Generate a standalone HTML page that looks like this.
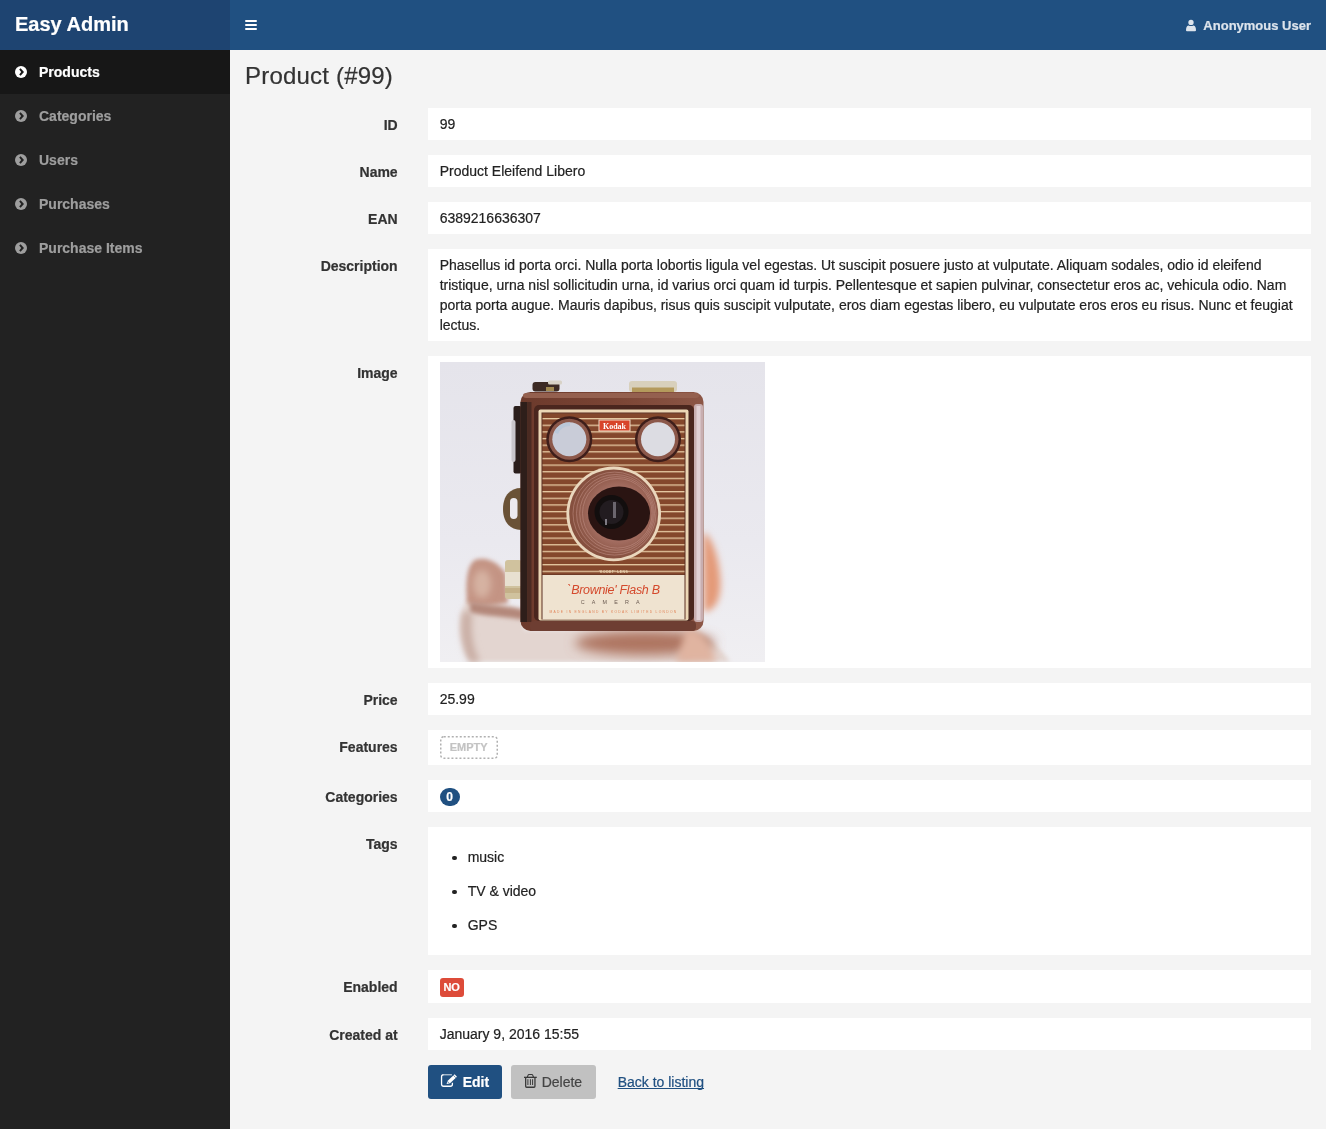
<!DOCTYPE html>
<html>
<head>
<meta charset="utf-8">
<title>Product (#99) - Easy Admin</title>
<style>
*{box-sizing:border-box;}
html,body{margin:0;padding:0;}
body{width:1326px;height:1129px;overflow:hidden;-webkit-text-stroke:0.2px currentColor;background:#f4f4f4;font-family:"Liberation Sans",sans-serif;font-size:14px;line-height:20px;color:#222;position:relative;}
.logo{position:absolute;left:0;top:0;width:230px;height:50px;background:#1e4471;color:#fff;font-size:20px;font-weight:bold;line-height:48px;padding-left:15px;}
.navbar{position:absolute;left:230px;top:0;right:0;height:50px;background:#205081;}
.burger{position:absolute;left:15px;top:20px;width:12px;height:10px;}
.burger i{display:block;position:absolute;left:0;width:12px;height:2px;background:#fff;border-radius:1px;}
.user{position:absolute;right:15px;top:16px;color:#dde4ec;font-size:13px;font-weight:bold;line-height:20px;}
.user svg{position:absolute;left:-18.5px;top:2.5px;}
.sidebar{position:absolute;left:0;top:50px;width:230px;bottom:0;background:#222;}
.menu{list-style:none;margin:0;padding:0;}
.menu li{position:relative;height:44px;line-height:44px;padding-left:39px;color:#9e9e9e;font-weight:bold;font-size:14px;}
.menu li.active{background:#171717;color:#fff;}
.menu li svg{position:absolute;left:15px;top:16px;}
.content{position:absolute;left:230px;top:50px;right:0;bottom:0;}
h1{position:absolute;left:15px;top:11px;margin:0;font-size:24px;font-weight:normal;line-height:30px;color:#333;letter-spacing:0.2px;}
.row{position:absolute;left:0;width:1096px;}
.row label{position:absolute;left:0;width:182.67px;padding-right:15px;text-align:right;font-weight:bold;color:#333;top:7px;line-height:20px;}
.row .fc{position:absolute;left:197.67px;width:883.33px;background:#fff;padding:6px 12px;line-height:20px;}

.empty{position:absolute;left:12px;top:6px;width:58px;height:23px;color:#c3c3c3;font-size:11px;font-weight:bold;line-height:23px;text-align:center;}
.badge{position:absolute;left:12px;top:8px;width:20px;height:18px;border-radius:9px;background:#205081;color:#fff;font-size:12px;font-weight:bold;line-height:18px;text-align:center;}
.lbl-no{position:absolute;left:12px;top:8px;width:24px;height:19px;border-radius:3px;background:#dd4b39;color:#fff;font-size:11px;font-weight:bold;line-height:19px;text-align:center;}
ul.tags{list-style:none;margin:0;padding:7px 0 7px 0;}
ul.tags li{position:relative;padding:7px 0 7px 28px;line-height:20px;}
ul.tags li:before{content:"";position:absolute;left:12.75px;top:15.75px;width:4.5px;height:4.5px;border-radius:50%;background:#222;}
.actions{position:absolute;left:197.67px;top:1015px;height:34px;}
.btn{position:absolute;top:0;height:34px;border-radius:3px;line-height:34px;font-size:14px;}
.btn svg{position:absolute;}
.btn-edit{left:0;width:74px;background:#205081;color:#fff;font-weight:bold;padding-left:35px;}
.btn-edit svg{left:12px;top:9px;}
.btn-del{left:83px;width:85px;background:#c1c1c1;color:#444;padding-left:31px;}
.btn-del svg{left:13px;top:9px;}
.back{position:absolute;left:190px;top:0;line-height:34px;color:#205081;text-decoration:underline;text-decoration-skip-ink:none;white-space:nowrap;}
.fc svg.cam{position:absolute;left:12px;top:6px;}
</style>
</head>
<body><div id="wrap" style="position:absolute;left:0;top:0;width:1326px;height:1129px;will-change:transform;">
<div class="logo">Easy Admin</div>
<div class="navbar">
  <div class="burger"><i style="top:0"></i><i style="top:4px"></i><i style="top:8px"></i></div>
  <div class="user"><svg width="12" height="13" viewBox="0 0 12 13"><circle cx="6" cy="3.4" r="2.65" fill="#dde4ec"/><path d="M1 11.2 Q1 7.3 3.4 6.5 Q6 7.7 8.6 6.5 Q11 7.3 11 11.2 Q11 12.2 10 12.2 H2 Q1 12.2 1 11.2 Z" fill="#dde4ec"/></svg>Anonymous User</div>
</div>
<div class="sidebar">
  <ul class="menu">
    <li class="active"><svg width="12" height="12" viewBox="0 0 12 12"><circle cx="6" cy="6" r="6" fill="#fff"/><path d="M5.6 2.2 L9 6 L5.6 9.8 L4.2 8.4 L6.2 6 L4.2 3.6 Z" fill="#171717"/></svg>Products</li>
    <li><svg width="12" height="12" viewBox="0 0 12 12"><circle cx="6" cy="6" r="6" fill="#9e9e9e"/><path d="M5.6 2.2 L9 6 L5.6 9.8 L4.2 8.4 L6.2 6 L4.2 3.6 Z" fill="#222"/></svg>Categories</li>
    <li><svg width="12" height="12" viewBox="0 0 12 12"><circle cx="6" cy="6" r="6" fill="#9e9e9e"/><path d="M5.6 2.2 L9 6 L5.6 9.8 L4.2 8.4 L6.2 6 L4.2 3.6 Z" fill="#222"/></svg>Users</li>
    <li><svg width="12" height="12" viewBox="0 0 12 12"><circle cx="6" cy="6" r="6" fill="#9e9e9e"/><path d="M5.6 2.2 L9 6 L5.6 9.8 L4.2 8.4 L6.2 6 L4.2 3.6 Z" fill="#222"/></svg>Purchases</li>
    <li><svg width="12" height="12" viewBox="0 0 12 12"><circle cx="6" cy="6" r="6" fill="#9e9e9e"/><path d="M5.6 2.2 L9 6 L5.6 9.8 L4.2 8.4 L6.2 6 L4.2 3.6 Z" fill="#222"/></svg>Purchase Items</li>
  </ul>
</div>
<div class="content">
  <h1>Product (#99)</h1>
  <div class="row" style="top:58px"><label>ID</label><div class="fc" style="height:32px">99</div></div>
  <div class="row" style="top:105px"><label>Name</label><div class="fc" style="height:32px">Product Eleifend Libero</div></div>
  <div class="row" style="top:152px"><label>EAN</label><div class="fc" style="height:32px">6389216636307</div></div>
  <div class="row" style="top:199px"><label>Description</label><div class="fc" style="height:92px">Phasellus id porta orci. Nulla porta lobortis ligula vel egestas. Ut suscipit posuere justo at vulputate. Aliquam sodales, odio id eleifend<br>tristique, urna nisl sollicitudin urna, id varius orci quam id turpis. Pellentesque et sapien pulvinar, consectetur eros ac, vehicula odio. Nam<br>porta porta augue. Mauris dapibus, risus quis suscipit vulputate, eros diam egestas libero, eu vulputate eros eros eu risus. Nunc et feugiat<br>lectus.</div></div>
  <div class="row" style="top:306px"><label>Image</label><div class="fc" style="height:312px"><svg class="cam" width="325" height="300" viewBox="0 0 325 300">
<defs>
<linearGradient id="bg" x1="0" y1="0" x2="0" y2="1"><stop offset="0" stop-color="#e5e4eb"/><stop offset="0.6" stop-color="#eae9ef"/><stop offset="1" stop-color="#f0eff2"/></linearGradient>
<filter id="bl" x="-50%" y="-50%" width="200%" height="200%"><feGaussianBlur stdDeviation="3.5"/></filter>
<filter id="bl5" x="-50%" y="-50%" width="200%" height="200%"><feGaussianBlur stdDeviation="6"/></filter>
<filter id="bl2" x="-50%" y="-50%" width="200%" height="200%"><feGaussianBlur stdDeviation="2"/></filter>
<pattern id="stripes" x="0" y="56" width="10" height="6.64" patternUnits="userSpaceOnUse"><rect width="10" height="6.64" fill="#84472c"/><rect y="0" width="10" height="1.3" fill="#e6c9a2"/></pattern>
<linearGradient id="bodyg" x1="0" y1="0" x2="1" y2="0"><stop offset="0" stop-color="#6c3a2c"/><stop offset="0.5" stop-color="#7a4434"/><stop offset="1" stop-color="#8c5646"/></linearGradient>
<radialGradient id="lensg" cx="0.55" cy="0.5" r="0.5"><stop offset="0.6" stop-color="#a46e62"/><stop offset="1" stop-color="#86503f"/></radialGradient>
</defs>
<rect width="325" height="300" fill="url(#bg)"/>
<!-- hand -->
<path d="M30 300 C20 282 17 262 23 246 C26 236 32 232 42 238 L84 248 L84 268 L255 268 C270 275 284 290 290 300 Z" fill="#e3d5d0" filter="url(#bl2)"/>
<path d="M23 250 C20 268 22 286 30 300 L40 300 C32 286 30 268 32 250 Z" fill="#c8aca2" filter="url(#bl)"/>
<path d="M27 241 C25 216 28 201 36 197.5 C48 194 60 202 66 212 L68 241 C55 244 40 245 27 241 Z" fill="#c49484" filter="url(#bl2)"/>
<ellipse cx="42" cy="222" rx="9" ry="14" fill="#d6b2a2" filter="url(#bl)"/>
<path d="M30 240 C50 244 70 244 84 248 L84 258 C60 254 42 254 30 250 Z" fill="#b4887a" filter="url(#bl2)"/>
<ellipse cx="205" cy="281" rx="70" ry="12" fill="#ae7560" filter="url(#bl5)"/>
<path d="M263 170 C271 174 278 192 280 214 C282 236 276 248 264 250 Z" fill="#e49a78" filter="url(#bl)"/>
<path d="M246 268 C260 266 270 280 276 300 L236 300 Z" fill="#e0b4a0" filter="url(#bl)"/>
<!-- knobs top -->
<rect x="92.5" y="20" width="27" height="9.5" rx="3" fill="#3c2a24"/>
<rect x="108" y="18.5" width="14" height="4" rx="1.5" fill="#d8d2c6"/>
<rect x="106" y="25" width="8" height="4" fill="#a08850"/>
<rect x="189" y="19" width="48" height="11" rx="3" fill="#d8d0bc"/>
<rect x="192" y="25.5" width="42" height="4.5" fill="#b49a5c"/>
<!-- left side parts -->
<rect x="73.5" y="44" width="8" height="67.5" rx="2" fill="#2a1e1c"/>
<rect x="71.5" y="58" width="4" height="42" rx="2" fill="#c8c6cc"/>
<path d="M81 126 C70 126 63 134 63 147 C63 160 70 168 81 168 Z" fill="#6a5236"/>
<rect x="70" y="136" width="7.5" height="21" rx="3.7" fill="#eceaee"/>
<rect x="65" y="198" width="17" height="39" rx="3" fill="#d0c29e"/>
<rect x="65" y="210" width="17" height="14" fill="#e8e0d0"/>
<rect x="65" y="226" width="17" height="5" fill="#c4b088"/>
<!-- body -->
<rect x="80.5" y="30" width="183" height="239" rx="10" fill="url(#bodyg)"/>
<rect x="80.5" y="40" width="7" height="220" fill="#2e1e1a"/><rect x="87.5" y="40" width="4" height="220" fill="#4a2a22"/>
<rect x="83" y="31" width="176" height="5" rx="3" fill="#94604f"/>
<rect x="254" y="42" width="9" height="218" rx="3" fill="#c8aeb0"/>
<rect x="256.5" y="44" width="4" height="214" fill="#e0d0d4"/>
<rect x="94" y="43" width="160" height="216" rx="5" fill="#4a261e"/>
<rect x="98.5" y="47.5" width="150" height="211" rx="2" fill="#ecd7b6"/>
<rect x="101.5" y="50.5" width="144" height="207" fill="#5a2e22"/>
<rect x="102.5" y="51.5" width="142" height="161" fill="url(#stripes)"/>
<!-- viewfinders -->
<circle cx="129.3" cy="77.3" r="23" fill="#3e1e1a"/>
<circle cx="129.3" cy="77.3" r="20.5" fill="#8c584a"/>
<circle cx="129.3" cy="77.3" r="17" fill="#c9ccd8"/>
<path d="M114 70 A17 17 0 0 1 130 60.3 L130 64 A13 13 0 0 0 118 72 Z" fill="#b4c4d8" opacity="0.7"/>
<circle cx="218" cy="77.3" r="23" fill="#3e1e1a"/>
<circle cx="218" cy="77.3" r="20.5" fill="#8c584a"/>
<circle cx="218" cy="77.3" r="17" fill="#dcdce2"/>
<!-- kodak -->
<rect x="158.5" y="57.5" width="32" height="12" fill="#f0dcc6"/>
<rect x="159.5" y="58.5" width="30" height="10" fill="#d8442a"/>
<text x="174.5" y="66.6" font-family="Liberation Serif" font-weight="bold" font-size="8" fill="#fff" text-anchor="middle">Kodak</text>
<!-- lens -->
<circle cx="173.7" cy="151.9" r="47.3" fill="#ead7bd"/>
<circle cx="173.7" cy="151.9" r="44.5" fill="url(#lensg)"/>
<g fill="none" stroke="#c39288" stroke-width="0.7" opacity="0.75">
<circle cx="174.5" cy="151.6" r="41.5"/><circle cx="175.5" cy="151.5" r="39"/><circle cx="176.5" cy="151.4" r="36.8"/><circle cx="177.3" cy="151.3" r="34.8"/>
</g>
<ellipse cx="179" cy="151.5" rx="31" ry="27" fill="#2a1412"/>
<circle cx="171.5" cy="150" r="17" fill="#120e0e"/>
<circle cx="171.5" cy="150" r="12" fill="#221c20"/>
<rect x="173" y="140" width="3" height="16" fill="#8a8690" opacity="0.7"/>
<rect x="165" y="157" width="2" height="6" fill="#aaa6b0" opacity="0.7"/>
<!-- label -->
<text x="173.5" y="211.3" font-family="Liberation Sans" font-weight="bold" font-size="3.4" fill="#ecd7b6" text-anchor="middle" letter-spacing="0.5">'KODET' LENS</text>
<rect x="102.5" y="213" width="142" height="44.5" fill="#efe3d0"/>
<text x="173.5" y="231.8" font-family="Liberation Sans" font-style="italic" font-size="12.5" fill="#d4492c" text-anchor="middle" letter-spacing="-0.3">`Brownie' Flash B</text>
<text x="173.8" y="241.6" font-family="Liberation Sans" font-size="5.4" fill="#6a5a50" text-anchor="middle" letter-spacing="7.2">CAMERA</text>
<text x="173.5" y="251.3" font-family="Liberation Sans" font-size="3.3" fill="#e2875c" text-anchor="middle" letter-spacing="1.3">MADE IN ENGLAND BY KODAK LIMITED LONDON</text>
<rect x="90" y="259" width="166" height="10" rx="4" fill="#6e3e32"/>
</svg>
</div></div>
  <div class="row" style="top:633px"><label>Price</label><div class="fc" style="height:32px">25.99</div></div>
  <div class="row" style="top:680px"><label>Features</label><div class="fc" style="height:35px"><span class="empty"><svg width="58" height="23" viewBox="0 0 58 23" style="position:absolute;left:0;top:0"><rect x="0.75" y="0.75" width="56.5" height="21.5" rx="3" fill="none" stroke="#b0b0b0" stroke-width="1.5" stroke-dasharray="2 2"/></svg>EMPTY</span></div></div>
  <div class="row" style="top:730px"><label>Categories</label><div class="fc" style="height:32px"><span class="badge">0</span></div></div>
  <div class="row" style="top:777px"><label>Tags</label><div class="fc" style="height:128px"><ul class="tags"><li>music</li><li>TV &amp; video</li><li>GPS</li></ul></div></div>
  <div class="row" style="top:920px"><label>Enabled</label><div class="fc" style="height:33px"><span class="lbl-no">NO</span></div></div>
  <div class="row" style="top:968px"><label>Created at</label><div class="fc" style="height:32px">January 9, 2016 15:55</div></div>
  <div class="actions">
    <span class="btn btn-edit"><svg width="18" height="14" viewBox="0 0 18 14" style="overflow:visible"><path d="M12.4 8.7 V10.25 Q12.4 12.25 10.4 12.25 H3.55 Q1.55 12.25 1.55 10.25 V2.75 Q1.55 0.75 3.55 0.75" stroke="#fff" stroke-width="1.3" fill="none"/><path d="M3.3 0.75 H11.9" stroke="#fff" stroke-opacity="0.65" stroke-width="1.3"/><path d="M8.64 8.18 L15.8 1.4" stroke="#fff" stroke-width="3.4"/><path d="M6.6 10.1 L7.47 6.94 L9.81 9.42 Z" fill="#fff"/><path d="M13.43 1.3 L15.77 3.78" stroke="#205081" stroke-width="0.6"/><path d="M7.2 7.4 L9.3 9.6" stroke="#205081" stroke-width="0.6"/></svg>Edit</span>
    <span class="btn btn-del"><svg width="13" height="14" viewBox="0 0 13 14" style="overflow:visible"><path d="M0 3.35 H12.8" stroke="#3a3a3a" stroke-width="1.3"/><path d="M3.3 3.3 L4.2 0.9 Q4.4 0.55 4.8 0.55 H8.0 Q8.4 0.55 8.6 0.9 L9.5 3.3" stroke="#3a3a3a" stroke-width="1.1" fill="none"/><path d="M1.65 3.6 V12.3 Q1.65 13.25 2.6 13.25 H10 Q10.95 13.25 10.95 12.3 V3.6" stroke="#3a3a3a" stroke-width="1.3" fill="none"/><path d="M3.9 5.2 V11 M6.4 5.2 V11 M8.6 5.2 V11" stroke="#3a3a3a" stroke-width="1"/></svg>Delete</span>
    <a class="back">Back to listing</a>
  </div>
</div>
</div></body>
</html>
